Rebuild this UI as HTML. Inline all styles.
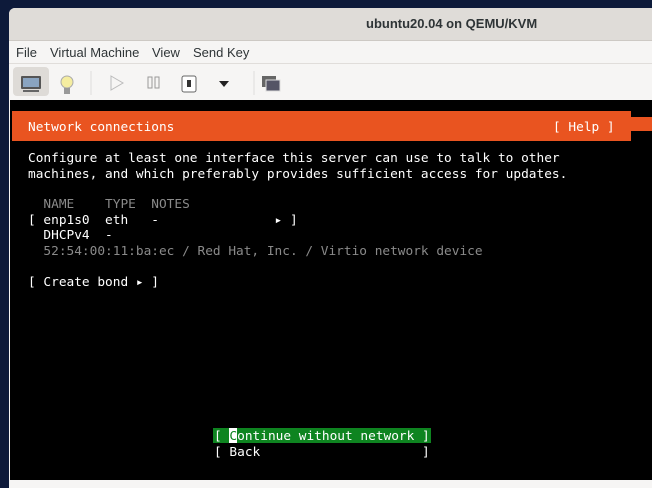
<!DOCTYPE html>
<html><head><style>
body{margin:0;width:652px;height:480px;overflow:hidden;background:#0d1a3a;position:relative;font-family:"Liberation Sans",sans-serif}
.win{position:absolute;left:9px;top:8px;width:660px;height:480px;background:#f6f5f4;border-radius:6px 0 0 0}
.title{position:absolute;left:0;top:0;right:0;height:32px;background:#dfdcd8;border-bottom:1px solid #cdc9c4;border-radius:6px 0 0 0}
.title span{position:absolute;left:357px;top:8px;font-size:13px;font-weight:bold;color:#2e3436}
.menu{position:absolute;top:33px;left:0;right:0;height:22px;border-bottom:1px solid #e0ddda;font-size:13px;color:#2e3436}
.menu span{position:absolute;top:4px}
.con{position:absolute;left:10px;top:100px;width:642px;height:380px;background:#000}
.t{position:absolute;font-family:"DejaVu Sans Mono",monospace;font-size:12.8px;line-height:15.5px;white-space:pre;color:#fff}
.g{color:#8a8a8a}
</style></head><body>
<div class="win">
<div class="title"><span>ubuntu20.04 on QEMU/KVM</span></div>
<div class="menu"><span style="left:7px">File</span><span style="left:41px">Virtual Machine</span><span style="left:143px">View</span><span style="left:184px">Send Key</span></div>
<div style="position:absolute;left:4px;top:59px;width:36px;height:29px;background:#dedbd7;border-radius:4px"></div>
<svg style="position:absolute;left:0;top:55px" width="300" height="40">
<rect x="12" y="13" width="20" height="13" fill="#555" rx="1"/><rect x="14" y="15" width="16" height="9" fill="#8aa4c0"/><rect x="14" y="27" width="16" height="2" fill="#666"/>
<circle cx="58" cy="19" r="6" fill="#f5eda0" stroke="#aaa"/><rect x="55" y="25" width="6" height="6" fill="#999"/>
<line x1="82" y1="8" x2="82" y2="32" stroke="#ddd"/>
<path d="M102 13 L114 20 L102 27 Z" fill="none" stroke="#bbb"/>
<rect x="139" y="14" width="4" height="11" fill="none" stroke="#999"/><rect x="146" y="14" width="4" height="11" fill="none" stroke="#999"/>
<rect x="173" y="13" width="14" height="16" rx="2" fill="#fff" stroke="#666"/><rect x="178" y="17" width="4" height="7" fill="#333"/>
<path d="M210 18 L220 18 L215 24 Z" fill="#222"/>
<line x1="245" y1="8" x2="245" y2="32" stroke="#ddd"/>
<rect x="253" y="13" width="14" height="11" fill="#666"/><rect x="257" y="17" width="14" height="11" fill="#556" stroke="#ddd"/>
</svg>
</div>
<div class="con"></div>
<div style="position:absolute;left:12px;top:111px;width:619px;height:30px;background:#e95420"></div>
<div style="position:absolute;left:631px;top:117px;width:21px;height:14px;background:#e95420"></div>
<div class="t" style="left:28px;top:120px">Network connections</div>
<div class="t" style="left:553px;top:120px">[ Help ]</div>
<div class="t" style="left:28px;top:151px">Configure at least one interface this server can use to talk to other
machines, and which preferably provides sufficient access for updates.</div>
<div class="t" style="left:28px;top:197px"><span class="g">  NAME    TYPE  NOTES</span>
[ enp1s0  eth   -               ▸ ]
  DHCPv4  -
<span class="g">  52:54:00:11:ba:ec / Red Hat, Inc. / Virtio network device</span>

[ Create bond ▸ ]</div>
<div style="position:absolute;left:213px;top:428px;width:218px;height:15px;background:#0e8420"></div>
<div style="position:absolute;left:229px;top:428px;width:8px;height:15px;background:#fff"></div>
<div class="t" style="left:214px;top:429px">[ <span style="color:#0e8420">C</span>ontinue without network ]
[ Back                     ]</div>
</body></html>
